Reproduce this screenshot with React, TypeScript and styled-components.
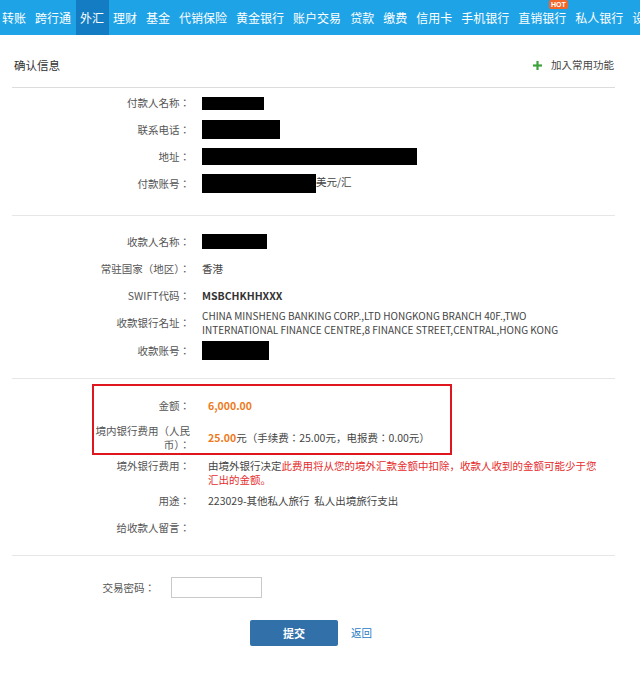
import React from "react";
import styled, { createGlobalStyle } from "styled-components";

const GlobalStyle = createGlobalStyle`
  html, body {
    margin: 0;
    padding: 0;
    background: #fff;
    font-family: "Noto Sans CJK JP", "Noto Sans CJK SC", sans-serif;
  }
`;

const navItems = [
  "转账", "跨行通", "外汇", "理财", "基金", "代销保险", "黄金银行", "账户交易",
  "贷款", "缴费", "信用卡", "手机银行", "直销银行", "私人银行", "设置"
];

export default function App() {
  return (
    <Page>
      <GlobalStyle />
      <NavBar>
        {navItems.map(item => (
          <NavItem key={item} $active={item === "外汇"}>
            {item}
            {item === "直销银行" && <HotBadge>HOT</HotBadge>}
          </NavItem>
        ))}
      </NavBar>

      <Content>
        <Header>
          <Title>确认信息</Title>
          <AddFav>
            <svg width="9" height="9" viewBox="0 0 9 9">
              <rect x="3.4" y="0" width="2.2" height="9" fill="#3ea23a" />
              <rect x="0" y="3.4" width="9" height="2.2" fill="#3ea23a" />
            </svg>
            <span>加入常用功能</span>
          </AddFav>
        </Header>

        <Section $top={1} $bottom={18}>
          <Row>
            <Label>付款人名称：</Label>
            <Value><Redacted $w={62} $h={13} /></Value>
          </Row>
          <Row>
            <Label>联系电话：</Label>
            <Value><Redacted $w={78} $h={19} /></Value>
          </Row>
          <Row>
            <Label>地址：</Label>
            <Value><Redacted $w={215} $h={17} /></Value>
          </Row>
          <Row>
            <Label>付款账号：</Label>
            <Value>
              <Redacted $w={114} $h={19} />
              美元/汇
            </Value>
          </Row>
        </Section>

        <Section $top={12} $bottom={14}>
          <Row>
            <Label>收款人名称：</Label>
            <Value><Redacted $w={65} $h={15} /></Value>
          </Row>
          <Row>
            <Label>常驻国家（地区）：</Label>
            <Value>香港</Value>
          </Row>
          <Row>
            <Label>SWIFT代码：</Label>
            <Value><Strong>MSBCHKHHXXX</Strong></Value>
          </Row>
          <Row>
            <Label>收款银行名址：</Label>
            <Value>
              <Latin>
                CHINA MINSHENG BANKING CORP.,LTD HONGKONG BRANCH 40F.,TWO
                <br />
                INTERNATIONAL FINANCE CENTRE,8 FINANCE STREET,CENTRAL,HONG KONG
              </Latin>
            </Value>
          </Row>
          <Row>
            <Label>收款账号：</Label>
            <Value><Redacted $w={67} $h={19} /></Value>
          </Row>
        </Section>

        <Section $top={5} $bottom={14}>
          <Highlight>
            <Row $indent={0}>
              <Label $w={96}>金额：</Label>
              <Value $gap={18}><Amount>6,000.00</Amount></Value>
            </Row>
            <Row $indent={0}>
              <Label $w={96}>境内银行费用（人民币）：</Label>
              <Value $gap={18}>
                <Amount>25.00</Amount>元（手续费：25.00元，电报费：0.00元）
              </Value>
            </Row>
          </Highlight>
          <Row $start>
            <Label>境外银行费用：</Label>
            <Value $gap={18}>
              由境外银行决定
              <Warn>此费用将从您的境外汇款金额中扣除，收款人收到的金额可能少于您汇出的金额。</Warn>
            </Value>
          </Row>
          <Row>
            <Label>用途：</Label>
            <Value $gap={18}>223029-其他私人旅行&nbsp;&nbsp;私人出境旅行支出</Value>
          </Row>
          <Row>
            <Label>给收款人留言：</Label>
            <Value $gap={18} />
          </Row>
        </Section>

        <Footer>
          <Row $indent={43}>
            <Label $w={100}>交易密码：</Label>
            <PasswordInput type="password" />
          </Row>
          <Actions>
            <SubmitButton>提交</SubmitButton>
            <BackLink>返回</BackLink>
          </Actions>
        </Footer>
      </Content>
    </Page>
  );
}

const Page = styled.div`
  width: 640px;
  min-height: 673px;
  overflow: hidden;
  background: #fff;
`;

const NavBar = styled.div`
  display: flex;
  height: 35px;
  margin-left: -2.5px;
  background: #1ea3e6;
  white-space: nowrap;
  font-family: "Noto Sans CJK SC", sans-serif;
`;

const NavItem = styled.div<{ $active?: boolean }>`
  position: relative;
  flex-shrink: 0;
  padding: 0 4.5px;
  line-height: 35px;
  font-size: 12px;
  color: #fff;
  background: ${p => (p.$active ? "#137cc2" : "transparent")};
`;

const HotBadge = styled.span`
  position: absolute;
  top: 0;
  right: 3px;
  height: 9px;
  padding: 0 2px;
  border-radius: 2px;
  background: #f2662a;
  color: #fff;
  font-family: "Liberation Sans", sans-serif;
  font-size: 7px;
  font-weight: bold;
  line-height: 9px;
`;

const Content = styled.div`
  margin-left: 12px;
  width: 603px;
  font-size: 10.5px;
  line-height: 14px;
  color: #444;
`;

const Header = styled.div`
  display: flex;
  align-items: center;
  justify-content: space-between;
  height: 44px;
  padding: 8px 1px 0 2px;
  border-bottom: 1px solid #dcdcdc;
`;

const Title = styled.div`
  font-size: 11.5px;
  color: #333;
`;

const AddFav = styled.div`
  display: flex;
  align-items: center;
  gap: 9px;
  font-size: 10.5px;
  color: #444;
`;

const Section = styled.div<{ $top: number; $bottom: number }>`
  padding: ${p => p.$top}px 0 ${p => p.$bottom}px;
  border-bottom: 1px solid #e6e6e6;
`;

const Row = styled.div<{ $indent?: number; $start?: boolean }>`
  display: flex;
  align-items: ${p => (p.$start ? "flex-start" : "center")};
  min-height: 27px;
  padding: ${p => (p.$start ? "4px 17px 0 0" : "0 17px 0 0")};
  padding-left: ${p => p.$indent ?? 79}px;
  box-sizing: border-box;
`;

const Label = styled.div<{ $w?: number }>`
  flex-shrink: 0;
  width: ${p => p.$w ?? 99}px;
  text-align: right;
  color: #555;
`;

const Value = styled.div<{ $gap?: number }>`
  flex: 1;
  margin-left: ${p => p.$gap ?? 12}px;
  color: #444;
`;

const Redacted = styled.span<{ $w: number; $h: number }>`
  display: inline-block;
  vertical-align: middle;
  width: ${p => p.$w}px;
  height: ${p => p.$h}px;
  background: #000;
`;

const Latin = styled.span`
  font-size: 10px;
  white-space: nowrap;
`;

const Strong = styled.span`
  font-weight: bold;
  color: #333;
`;

const Highlight = styled.div`
  display: flex;
  flex-direction: column;
  gap: 5px;
  width: 356px;
  margin-left: 80px;
  padding: 6px 0 1px;
  border: 2px solid #e0161f;
`;

const Amount = styled.span`
  font-weight: bold;
  color: #ee7a1c;
`;

const Warn = styled.span`
  color: #e52b2b;
`;

const Footer = styled.div`
  padding-top: 18px;
`;

const PasswordInput = styled.input`
  width: 91px;
  height: 21px;
  margin-left: 16px;
  padding: 0 4px;
  box-sizing: border-box;
  border: 1px solid #c9c9c9;
  outline: none;
`;

const Actions = styled.div`
  display: flex;
  align-items: center;
  margin-top: 19px;
  padding-left: 238px;
`;

const SubmitButton = styled.button`
  width: 88px;
  height: 26px;
  border: none;
  border-radius: 2px;
  background: #3270aa;
  color: #fff;
  font-family: inherit;
  font-size: 11px;
  font-weight: bold;
  cursor: pointer;
`;

const BackLink = styled.a`
  margin-left: 13px;
  color: #2b7bc4;
  font-size: 10.5px;
  cursor: pointer;
`;
